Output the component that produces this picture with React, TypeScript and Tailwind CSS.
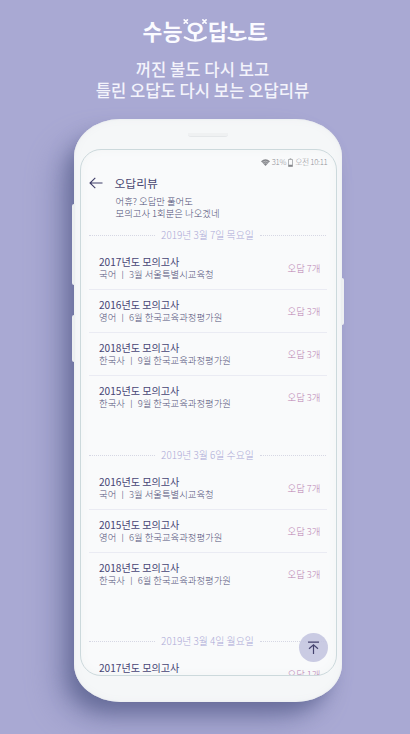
import { clsx } from "clsx";

type Exam = {
  title: string;
  subject: string;
  source: string;
  wrong: number;
};

type Day = {
  date: string;
  exams: Exam[];
};

const days: Day[] = [
  {
    date: "2019년 3월 7일 목요일",
    exams: [
      { title: "2017년도 모의고사", subject: "국어", source: "3월 서울특별시교육청", wrong: 7 },
      { title: "2016년도 모의고사", subject: "영어", source: "6월 한국교육과정평가원", wrong: 3 },
      { title: "2018년도 모의고사", subject: "한국사", source: "9월 한국교육과정평가원", wrong: 3 },
      { title: "2015년도 모의고사", subject: "한국사", source: "9월 한국교육과정평가원", wrong: 3 },
    ],
  },
  {
    date: "2019년 3월 6일 수요일",
    exams: [
      { title: "2016년도 모의고사", subject: "국어", source: "3월 서울특별시교육청", wrong: 7 },
      { title: "2015년도 모의고사", subject: "영어", source: "6월 한국교육과정평가원", wrong: 3 },
      { title: "2018년도 모의고사", subject: "한국사", source: "6월 한국교육과정평가원", wrong: 3 },
    ],
  },
  {
    date: "2019년 3월 4일 월요일",
    exams: [{ title: "2017년도 모의고사", subject: "", source: "", wrong: 1 }],
  },
];

function Logo() {
  return (
    <svg width="130" height="30" viewBox="0 0 130 30" className="block overflow-visible" fill="none" stroke="#fbfbff" strokeLinecap="round">
      <clipPath id="stem">
        <path d="M0 0h130v19.600H0z" />
      </clipPath>
      <g fill="#fbfbff" stroke="none" fontSize="21.5" fontWeight="700">
        <text x="2.600" y="22.500">수</text>
        <text x="22.700" y="22.500">능</text>
        <text x="68" y="22.500">답</text>
        <g clipPath="url(#stem)">
          <text x="45.200" y="22.500">오</text>
          <text x="87.200" y="22.500">노</text>
        </g>
        <text x="107.600" y="22.500">트</text>
      </g>
      {/* curved strokes under the letters and crossed marks around the third one */}
      <path d="M55.300 18v4" strokeWidth="2.500" />
      <path d="M44.800 20.400q10.300 6.600 21 0" strokeWidth="2.300" />
      <path d="M44.200 2.900l3.200 3.200M47.400 2.900l-3.200 3.200M62.900 2.900l3.200 3.200M66.100 2.900l-3.200 3.200" strokeWidth="1.700" />
      <path d="M88.600 20.900q8.600 3.600 17 0" strokeWidth="2.400" />
      <path d="M109.200 20.900q8.600 3.600 17 0" strokeWidth="2.300" />
    </svg>
  );
}

function StatusBar() {
  return (
    <div className="flex h-[12px] items-center justify-end pr-[8px] text-[7.800px] font-light tracking-[-0.300px] whitespace-nowrap text-[#92939a]">
      <svg width="9" height="7" viewBox="0 0 9 7" className="mr-[2px]" fill="#85868b">
        <path d="M0 2.200Q4.500-1.600 9 2.200L4.500 7Z" />
        <path d="M1.300 3.300q3.200-2.300 6.400 0M2.600 4.600q1.900-1.300 3.800 0" stroke="#f7f9fa" strokeWidth=".4" fill="none" />
      </svg>
      <span>31%</span>
      <svg width="5" height="9" viewBox="0 0 5 9" className="mx-[2px]">
        <path d="M.5 1.500h4v7h-4zM1.700.7h1.600" fill="none" stroke="#94959a" strokeWidth=".7" />
        <path d="M.5 6.800h4v1.700h-4z" fill="#85868b" />
      </svg>
      <span>오전 10:11</span>
    </div>
  );
}

function DateDivider({ date }: { date: string }) {
  return (
    <div className="flex h-[22px] items-center justify-between pr-[9px] pb-[2px] pl-[8px]">
      <span className="w-[66px] border-t border-dotted border-[#d6d7e4]" />
      <span className="text-[9.900px] leading-[14px] font-light whitespace-nowrap text-[#aba9d6]">{date}</span>
      <span className="w-[66px] border-t border-dotted border-[#d6d7e4]" />
    </div>
  );
}

function ExamRow({ exam, last }: { exam: Exam; last: boolean }) {
  return (
    <div
      className={clsx(
        "mr-[9px] ml-[8px] flex h-[43px] items-center justify-between border-b pr-[6px] pl-[10.500px]",
        last ? "border-transparent" : "border-[#eaebf3]"
      )}
    >
      <div className="whitespace-nowrap">
        <p className="text-[10.100px] leading-[13px] text-[#464474]">{exam.title}</p>
        <p className="h-[13px] text-[9.400px] leading-[13px] font-light text-[#53527a]">
          {exam.subject && `${exam.subject} ㅣ ${exam.source}`}
        </p>
      </div>
      <span className="text-[9.400px] leading-[13px] font-light whitespace-nowrap text-[#b87db0]">오답 {exam.wrong}개</span>
    </div>
  );
}

export default function App() {
  return (
    <main className="flex h-[734px] w-[410px] flex-col items-center overflow-hidden bg-[#a9a9d3] font-['Noto_Sans_CJK_KR',sans-serif]">
      <header className="flex h-[119px] shrink-0 flex-col items-center pt-[17px]">
        <Logo />
        <p className="mt-[12px] mr-[5px] text-center text-[16.600px] leading-[21px] font-medium whitespace-nowrap text-[#f3f3fb]">
          꺼진 불도 다시 보고
          <br />
          틀린 오답도 다시 보는 오답리뷰
        </p>
      </header>

      <div className="relative ml-[6px] flex h-[583px] w-[268px] shrink-0 flex-col items-center rounded-[46px/38px] bg-[#f5f7f8] shadow-[-9px_13px_20px_-5px_#666c99,-20px_20px_34px_-6px_#8285b2]">
        {/* side buttons */}
        <span className="absolute top-[85px] -left-[2px] h-[81px] w-[3px] rounded-l-[2px] bg-[#edeff1]" />
        <span className="absolute top-[196px] -left-[2px] h-[47px] w-[3px] rounded-l-[2px] bg-[#edeff1]" />
        <span className="absolute top-[159px] -right-[2px] h-[47px] w-[3px] rounded-r-[2px] bg-[#edeff1]" />
        {/* bevel round the edge of the body */}
        <span className="absolute inset-0 rounded-[46px/38px] shadow-[inset_0_0_2px_#e4e7ea,inset_0_0_9px_#eff1f3]" />
        <div className="relative flex h-[30px] w-full shrink-0 justify-center pt-[14px]">
          <span className="h-[4px] w-[40px] rounded-b-[3px] border-b border-[#e4e7e9] bg-[#eff1f2]" />
        </div>

        <div className="relative h-[527px] w-[257px] shrink-0 overflow-hidden rounded-[21px] border border-[#ccd9dc] bg-[#f9fafb] pt-[6px] shadow-[inset_0_0_10px_#f2f5f5]">
          <StatusBar />
          <div className="mt-[8px] flex h-[14px] items-center pl-[8px]">
            <svg width="14" height="12" viewBox="0 0 14 12" fill="none" stroke="#3f3d68" strokeWidth="1.100">
              <path d="M13.500 6H1.200M6.300.800L1 6l5.300 5.200" />
            </svg>
            <h1 className="ml-[12px] text-[11.800px] leading-[14px] text-[#4a4872]">오답리뷰</h1>
          </div>
          <p className="mt-[6px] h-[29px] pl-[35px] text-[9.400px] leading-[11.500px] font-light text-[#4d4c74]">
            어휴? 오답만 풀어도
            <br />
            모의고사 1회분은 나오겠네
          </p>

          {days.map((day, d) => (
            <section key={day.date} className={d === 1 ? "pb-[35px]" : "pb-[26px]"}>
              <DateDivider date={day.date} />
              {day.exams.map((exam, i) => (
                <ExamRow key={exam.title} exam={exam} last={i === day.exams.length - 1} />
              ))}
            </section>
          ))}

          <button
            type="button"
            aria-label="맨 위로"
            className="absolute right-[8px] bottom-[13px] flex size-[29px] items-center justify-center rounded-full bg-[#c4c5e0]/90"
          >
            <svg width="13" height="13" viewBox="0 0 13 13" fill="none" stroke="#45436f" strokeWidth="1.200">
              <path d="M1 1.200h11M6.500 13V4M2 7.800L6.500 3.900l4.500 3.900" />
            </svg>
          </button>
        </div>
      </div>
    </main>
  );
}
